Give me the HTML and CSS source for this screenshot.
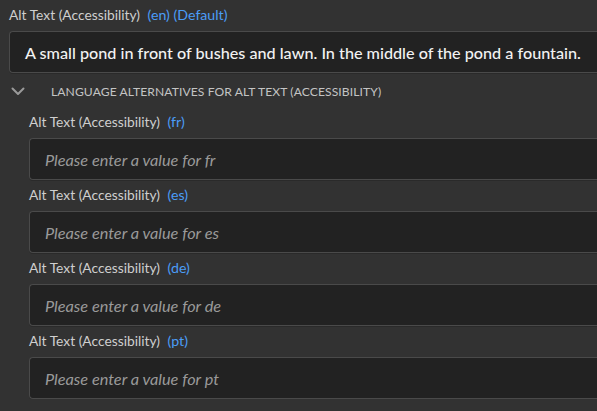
FILE: index.html
```html
<!DOCTYPE html>
<html>
<head>
<meta charset="utf-8">
<link rel="stylesheet" href="styles.css">
</head>
<body>
<div class="panel">
  <div class="field main">
    <div class="label">Alt Text (Accessibility) <span class="lang">(en) (Default)</span></div>
    <div class="input value">A small pond in front of bushes and lawn. In the middle of the pond a fountain.</div>
  </div>
  <div class="group-head">
    <svg class="chev" width="14" height="9" viewBox="0 0 14 9"><polyline points="1.5,1.5 7,7 12.5,1.5" fill="none" stroke="#9a9a9a" stroke-width="2" stroke-linecap="round" stroke-linejoin="round"/></svg>
    <span class="group-title">Language alternatives for Alt Text (Accessibility)</span>
  </div>
  <div class="alts">
    <div class="field">
      <div class="label">Alt Text (Accessibility) <span class="lang">(fr)</span></div>
      <div class="input placeholder">Please enter a value for fr</div>
    </div>
    <div class="field">
      <div class="label">Alt Text (Accessibility) <span class="lang">(es)</span></div>
      <div class="input placeholder">Please enter a value for es</div>
    </div>
    <div class="field">
      <div class="label">Alt Text (Accessibility) <span class="lang">(de)</span></div>
      <div class="input placeholder">Please enter a value for de</div>
    </div>
    <div class="field">
      <div class="label">Alt Text (Accessibility) <span class="lang">(pt)</span></div>
      <div class="input placeholder">Please enter a value for pt</div>
    </div>
  </div>
</div>
</body>
</html>
```

FILE: styles.css
```css
html, body {
  margin: 0;
  padding: 0;
  background: #323232;
  overflow: hidden;
}
body {
  font-family: "Lato", "Open Sans", sans-serif;
  color: #d2d2d2;
}
.panel {
  padding: 6px 0 0 9px;
  margin-right: -12px;
}
.field {
  display: flex;
  flex-direction: column;
}
.label {
  font-size: 13.8px;
  line-height: 18px;
  height: 18px;
  color: #cfcfcf;
  white-space: nowrap;
}
.lang {
  color: #4b9df7;
  margin-left: 4px;
  font-size: 14.2px;
}
.input {
  margin-top: 7px;
  height: 40px;
  border: 1px solid #4a4a4a;
  border-right: none;
  border-radius: 4px 0 0 4px;
  background: #222222;
  display: flex;
  align-items: center;
  padding-left: 15px;
  white-space: nowrap;
  box-shadow: 0 1px 0 #2a2a2a;
}
.value {
  font-size: 16.2px;
  color: #f2f2f2;
  font-weight: 500;
}
.placeholder {
  font-size: 16.3px;
  font-style: italic;
  color: #9a9a9a;
}
.group-head {
  height: 36px;
  display: flex;
  align-items: center;
  padding-left: 2px;
}
.chev {
  display: block;
}
.group-title {
  margin-left: 26px;
  font-size: 12.1px;
  text-transform: uppercase;
  color: #c4c4c4;
  letter-spacing: 0.1px;
}
.alts {
  padding-left: 20px;
  padding-top: 4px;
  display: flex;
  flex-direction: column;
  gap: 6px;
}
```
